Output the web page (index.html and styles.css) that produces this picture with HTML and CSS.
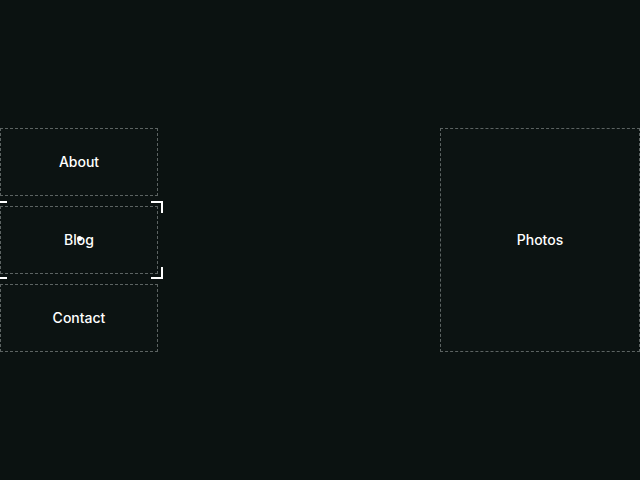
FILE: index.html
```html
<!DOCTYPE html>
<html>
<head>
<meta charset="utf-8">
<link rel="stylesheet" href="styles.css">
</head>
<body>
<div class="stage">
  <div class="menu">
    <div class="item">About</div>
    <div class="item active">Blog<span class="frame tl"></span><span class="frame tr"></span><span class="frame bl"></span><span class="frame br"></span><span class="dot"></span></div>
    <div class="item">Contact</div>
  </div>
  <div class="photos">Photos</div>
</div>
</body>
</html>
```
FILE: styles.css
```css
html, body {
  margin: 0;
  height: 100%;
  background: #0b1211;
}
body {
  font-family: Inter, "Noto Sans", sans-serif;
  font-size: 14px;
  font-weight: 500;
  color: #ffffff;
  overflow: hidden;
}
.stage {
  display: flex;
  justify-content: space-between;
  align-items: flex-start;
  padding-top: 128px;
}
.menu {
  display: flex;
  flex-direction: column;
  gap: 10px;
  width: 158px;
}
.item {
  position: relative;
  box-sizing: border-box;
  height: 68px;
  padding-bottom: 2px;
  border: 1px dashed #5c6362;
  display: flex;
  align-items: center;
  justify-content: center;
  background: #0c1312;
}
.photos {
  box-sizing: border-box;
  width: 200px;
  height: 224px;
  padding-bottom: 2px;
  border: 1px dashed #5c6362;
  display: flex;
  align-items: center;
  justify-content: center;
  background: #0c1312;
}
.frame {
  position: absolute;
  width: 10px;
  height: 10px;
  border: 0 solid #ffffff;
}
.frame.tl { top: -6px; left: -6px; border-top-width: 2px; border-left-width: 2px; }
.frame.tr { top: -6px; right: -6px; border-top-width: 2px; border-right-width: 2px; }
.frame.bl { bottom: -6px; left: -6px; border-bottom-width: 2px; border-left-width: 2px; }
.frame.br { bottom: -6px; right: -6px; border-bottom-width: 2px; border-right-width: 2px; }
.dot {
  position: absolute;
  left: 76px;
  top: 29px;
  width: 5px;
  height: 5px;
  border-radius: 50%;
  background: #ffffff;
}
```
